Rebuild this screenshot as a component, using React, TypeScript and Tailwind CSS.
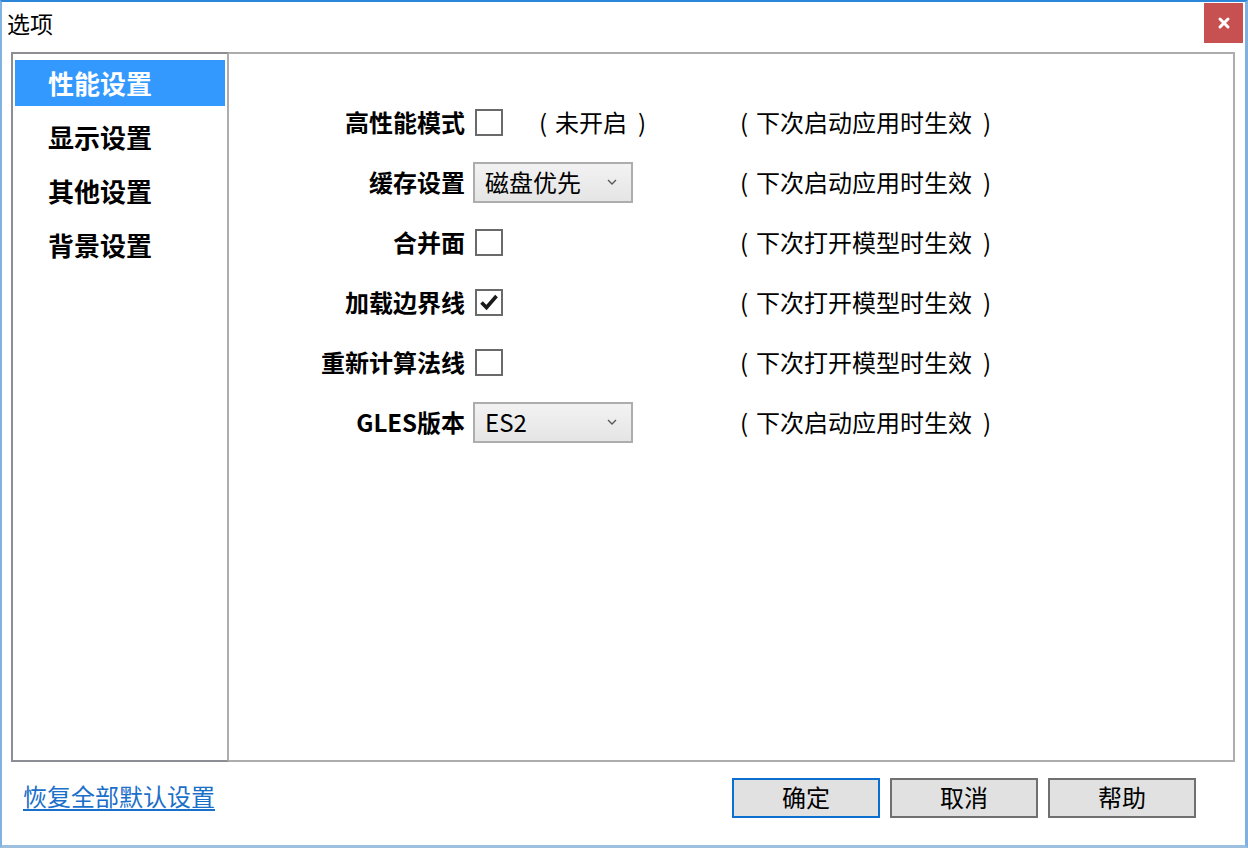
import { X } from "lucide-react"

const navItems = ["性能设置", "显示设置", "其他设置", "背景设置"]

type Row = {
  label: string
  kind: "check" | "select"
  checked?: boolean
  value?: string
  extra?: string
  note: string
}

const rows: Row[] = [
  { label: "高性能模式", kind: "check", extra: "未开启", note: "下次启动应用时生效" },
  { label: "缓存设置", kind: "select", value: "磁盘优先", note: "下次启动应用时生效" },
  { label: "合并面", kind: "check", note: "下次打开模型时生效" },
  { label: "加载边界线", kind: "check", checked: true, note: "下次打开模型时生效" },
  { label: "重新计算法线", kind: "check", note: "下次打开模型时生效" },
  { label: "GLES版本", kind: "select", value: "ES2", note: "下次启动应用时生效" },
]

function Paren({ text }: { text: string }) {
  return (
    <span className="flex items-center">
      <span className="w-[17px] pl-[1px]">(</span>
      <span>{text}</span>
      <span className="pl-[11px]">)</span>
    </span>
  )
}

function Checkbox({ checked }: { checked?: boolean }) {
  return (
    <div className="ml-[2px] w-[28px] h-[27px] border-2 border-[#6a6a6a] bg-white flex items-center justify-center">
      {checked && (
        <svg width="20" height="18" viewBox="0 0 20 18">
          <path d="M2.5 9.5 L7.5 14.5 L17.5 3" fill="none" stroke="#1a1a1a" strokeWidth="3.6" />
        </svg>
      )}
    </div>
  )
}

function Select({ value }: { value?: string }) {
  return (
    <div className="w-[160px] h-[41px] border-2 border-[#adadad] bg-gradient-to-b from-[#f2f2f2] to-[#e5e5e5] flex items-center justify-between pl-[10px] pr-[14px]">
      <span className="text-[24px] leading-none">{value}</span>
      <svg width="10" height="6" viewBox="0 0 10 6">
        <path d="M1 1 L5 5 L9 1" fill="none" stroke="#555" strokeWidth="1.3" />
      </svg>
    </div>
  )
}

export default function App() {
  return (
    <div className="w-[1248px] h-[848px] bg-white flex flex-col border-t-2 border-l-2 border-r-[3px] border-b-[3px] border-t-[#2b86da] border-l-[#82b2e0] border-r-[#7fb0df] border-b-[#9cbfdf] font-['Noto_Sans_CJK_SC',sans-serif] text-black">
      {/* title bar */}
      <div className="h-[50px] flex items-start justify-between">
        <div className="h-[43px] flex items-center pl-[5px] text-[23px]">选项</div>
        <div className="mt-[1px] mr-[2px] w-[39px] h-[40px] bg-[#c75050] flex items-center justify-center">
          <X className="w-[16px] h-[16px] text-white" strokeWidth={4.5} />
        </div>
      </div>

      {/* main frame */}
      <div className="h-[710px] ml-[9px] mr-[10px] flex">
        <div className="w-[218px] border-t-2 border-l-2 border-b-2 border-r-2 border-t-[#8c8e93] border-l-[#8c8e93] border-b-[#8c8e93] border-r-[#adadad] pt-[6px] pl-[2px] pr-[2px] flex flex-col gap-[8px]">
          {navItems.map((n, i) => (
            <div
              key={n}
              className={
                i === 0
                  ? "h-[46px] flex items-center pl-[33px] pb-[2px] bg-[#3399ff] text-white font-bold text-[26px]"
                  : "h-[46px] flex items-center pl-[33px] pb-[2px] text-black font-bold text-[26px]"
              }
            >
              {n}
            </div>
          ))}
        </div>

        <div className="flex-1 border-t-2 border-r-2 border-b-2 border-[#adadad] pt-[38px] flex flex-col">
          {rows.map((r) => (
            <div key={r.label} className="h-[60px] flex items-center">
              <div className="w-[236px] text-right font-bold text-[24px]">{r.label}</div>
              <div className="ml-[8px] w-[266px] flex items-center text-[24px]">
                {r.kind === "check" ? <Checkbox checked={r.checked} /> : <Select value={r.value} />}
                {r.extra && (
                  <span className="ml-[35px]">
                    <Paren text={r.extra} />
                  </span>
                )}
              </div>
              <div className="text-[24px]">
                <Paren text={r.note} />
              </div>
            </div>
          ))}
        </div>
      </div>

      {/* bottom bar */}
      <div className="flex-1 flex items-start justify-between pt-[14px] pl-[21px] pr-[49px]">
        <div className="h-[40px] flex items-center text-[24px] text-[#1a6fc9] underline underline-offset-[3px]">
          恢复全部默认设置
        </div>
        <div className="flex gap-[10px] pt-[2px]">
          <button className="w-[148px] h-[40px] border-2 border-[#0a6fd1] bg-[#e1e1e1] text-[24px] flex items-center justify-center pb-[2px]">
            确定
          </button>
          <button className="w-[148px] h-[40px] border-2 border-[#707070] bg-[#e1e1e1] text-[24px] flex items-center justify-center pb-[2px]">
            取消
          </button>
          <button className="w-[148px] h-[40px] border-2 border-[#707070] bg-[#e1e1e1] text-[24px] flex items-center justify-center pb-[2px]">
            帮助
          </button>
        </div>
      </div>
    </div>
  )
}
